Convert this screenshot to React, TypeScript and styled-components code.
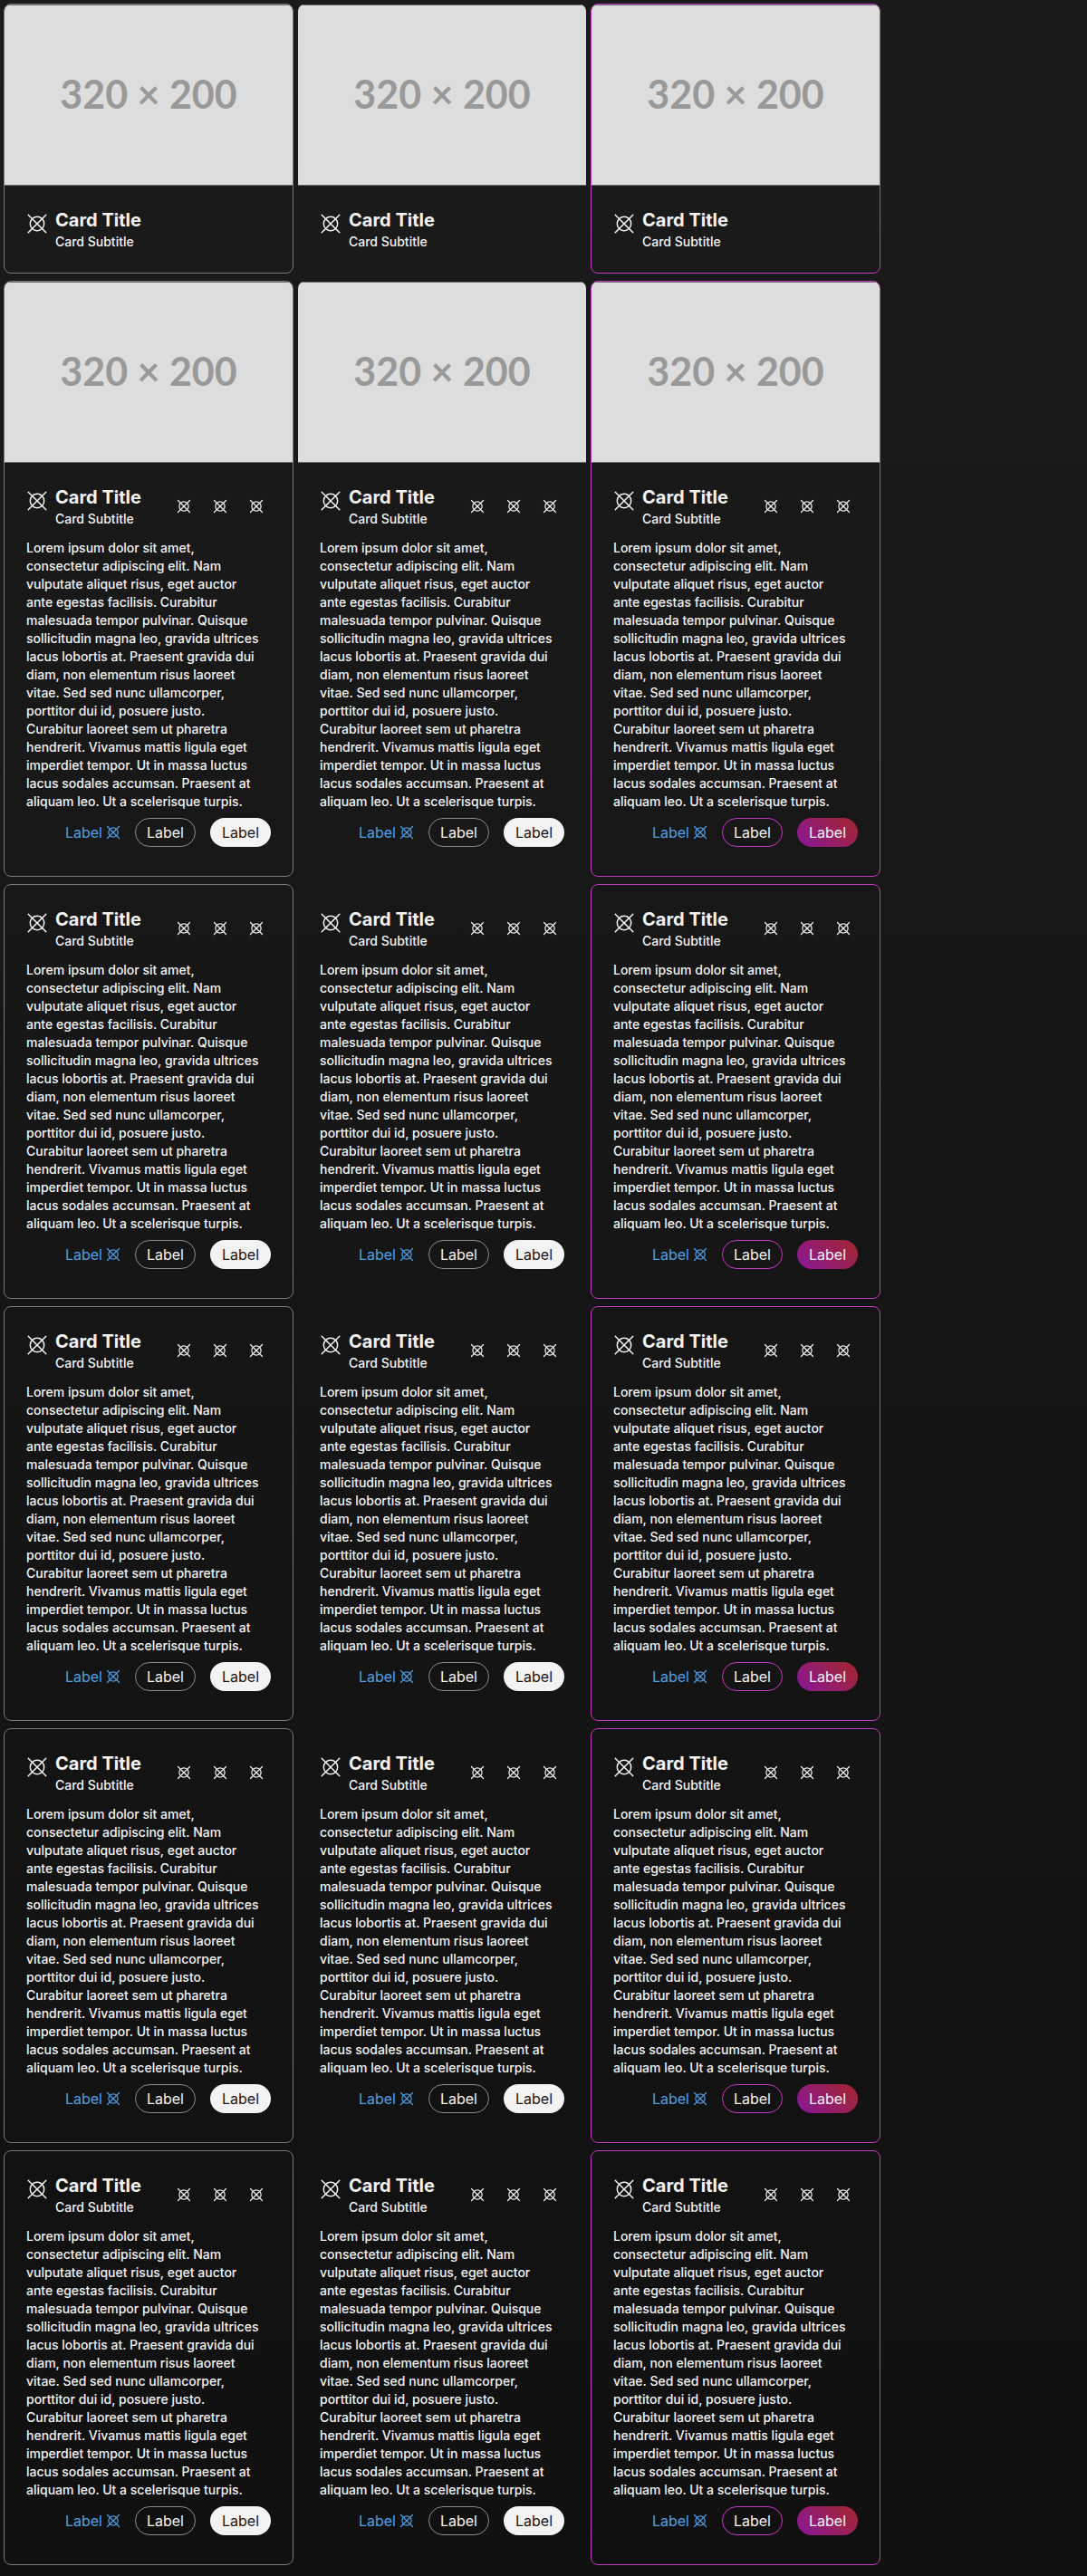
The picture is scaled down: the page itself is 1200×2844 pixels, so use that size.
import React from "react";
import styled, { createGlobalStyle, css } from "styled-components";

type Variant = "outline" | "plain" | "accent";

const GlobalStyle = createGlobalStyle`
  *, *::before, *::after {
    box-sizing: border-box;
  }

  body {
    margin: 0;
    color: #f3f3f3;
    background: linear-gradient(180deg, #1b1b1b, #101010);
    font-family: Inter, "Liberation Sans", sans-serif;
    font-size: 14px;
    font-weight: 500;
    line-height: 20px;
  }
`;

const borderColors: Record<Variant, string> = {
  outline: "#797979",
  plain: "transparent",
  accent: "#c239c2",
};

const Gallery = styled.main`
  display: grid;
  grid-template-columns: repeat(auto-fill, 320px);
  gap: 8px 4px;
  padding: 4px 4px 12px;
`;

const CardFrame = styled.article<{ $variant: Variant }>`
  display: flex;
  flex-direction: column;
  overflow: hidden;
  border: 1px solid ${({ $variant }) => borderColors[$variant]};
  border-radius: 8px;
`;

const Media = styled.div`
  display: flex;
  align-items: center;
  justify-content: center;
  height: 200px;
  padding-bottom: 2px;
  border: solid #6b6b6b;
  border-width: 1px 0;
  background: #dddddd;
  color: #999999;
  font-family: Lato, sans-serif;
  font-size: 43px;
  font-weight: 700;
  line-height: 52px;
`;

const Content = styled.div`
  padding: 24px;
`;

const Header = styled.header`
  display: flex;
  gap: 8px;
`;

const LeadingIcon = styled.span`
  display: flex;
  padding-top: 6px;
`;

const Headings = styled.div`
  flex: 1;
`;

const Title = styled.h2`
  margin: 0;
  font-size: 20px;
  font-weight: 700;
  line-height: 28px;
`;

const Subtitle = styled.p`
  margin: 0;
`;

const Actions = styled.div`
  display: flex;
  align-items: center;
  gap: 8px;
`;

const IconButton = styled.button`
  display: flex;
  align-items: center;
  justify-content: center;
  width: 32px;
  height: 32px;
  padding: 0;
  border: 0;
  border-radius: 16px;
  background: none;
  color: inherit;
  cursor: pointer;
`;

const Body = styled.p`
  margin: 12px 0 8px;
  padding-right: 12px;
`;

const Footer = styled.footer`
  display: flex;
  align-items: center;
  justify-content: flex-end;
  gap: 16px;
  padding-bottom: 8px;
  font-size: 16px;
  font-weight: 400;
`;

const TextLink = styled.a`
  display: flex;
  align-items: center;
  gap: 4px;
  color: #4ca0e8;
  text-decoration: none;
`;

const Pill = styled.button<{ $variant: Variant; $filled?: boolean }>`
  height: 32px;
  padding: 0 12px;
  border: 1px solid ${({ $variant }) => ($variant === "accent" ? "#c239c2" : "#8a8a8a")};
  border-radius: 16px;
  background: none;
  color: inherit;
  font: inherit;
  cursor: pointer;

  ${({ $filled, $variant }) =>
    $filled &&
    css`
      padding: 0 13px;
      border: 0;
      background: ${$variant === "accent" ? "linear-gradient(45deg, #881798, #a4262c)" : "#f3f3f3"};
      color: ${$variant === "accent" ? "#f3f3f3" : "#171717"};
    `}
`;

const Symbol = ({ size }: { size: number }) => (
  <svg
    width={size}
    height={size}
    viewBox="0 0 24 24"
    fill="none"
    stroke="currentColor"
    strokeWidth={size < 24 ? 1.8 : 1.5}
    strokeLinecap="round"
    aria-hidden="true"
  >
    <circle cx="12" cy="12" r="7.7" />
    <path d="M2.2 2.2 21.8 21.8M21.8 2.2 2.2 21.8" />
  </svg>
);

const bodyText =
  "Lorem ipsum dolor sit amet, consectetur adipiscing elit. Nam vulputate aliquet risus, eget auctor ante egestas facilisis. Curabitur malesuada tempor pulvinar. Quisque sollicitudin magna leo, gravida ultrices lacus lobortis at. Praesent gravida dui diam, non elementum risus laoreet vitae. Sed sed nunc ullamcorper, porttitor dui id, posuere justo. Curabitur laoreet sem ut pharetra hendrerit. Vivamus mattis ligula eget imperdiet tempor. Ut in massa luctus lacus sodales accumsan. Praesent at aliquam leo. Ut a scelerisque turpis.";

interface CardProps {
  variant: Variant;
  media: boolean;
  detailed: boolean;
}

const Card = ({ variant, media, detailed }: CardProps) => (
  <CardFrame $variant={variant}>
    {media && <Media>320 × 200</Media>}
    <Content>
      <Header>
        <LeadingIcon>
          <Symbol size={24} />
        </LeadingIcon>
        <Headings>
          <Title>Card Title</Title>
          <Subtitle>Card Subtitle</Subtitle>
        </Headings>
        {detailed && (
          <Actions>
            {[1, 2, 3].map((n) => (
              <IconButton key={n} type="button" aria-label={`Action ${n}`}>
                <Symbol size={16} />
              </IconButton>
            ))}
          </Actions>
        )}
      </Header>
      {detailed && (
        <>
          <Body>{bodyText}</Body>
          <Footer>
            <TextLink href="#">
              Label
              <Symbol size={16} />
            </TextLink>
            <Pill type="button" $variant={variant}>
              Label
            </Pill>
            <Pill type="button" $variant={variant} $filled>
              Label
            </Pill>
          </Footer>
        </>
      )}
    </Content>
  </CardFrame>
);

const variants: Variant[] = ["outline", "plain", "accent"];

const rows = [
  { media: true, detailed: false },
  { media: true, detailed: true },
  { media: false, detailed: true },
  { media: false, detailed: true },
  { media: false, detailed: true },
  { media: false, detailed: true },
];

export default function App() {
  return (
    <>
      <GlobalStyle />
      <Gallery>
        {rows.map((row, index) =>
          variants.map((variant) => <Card key={`${index}-${variant}`} variant={variant} {...row} />)
        )}
      </Gallery>
    </>
  );
}
